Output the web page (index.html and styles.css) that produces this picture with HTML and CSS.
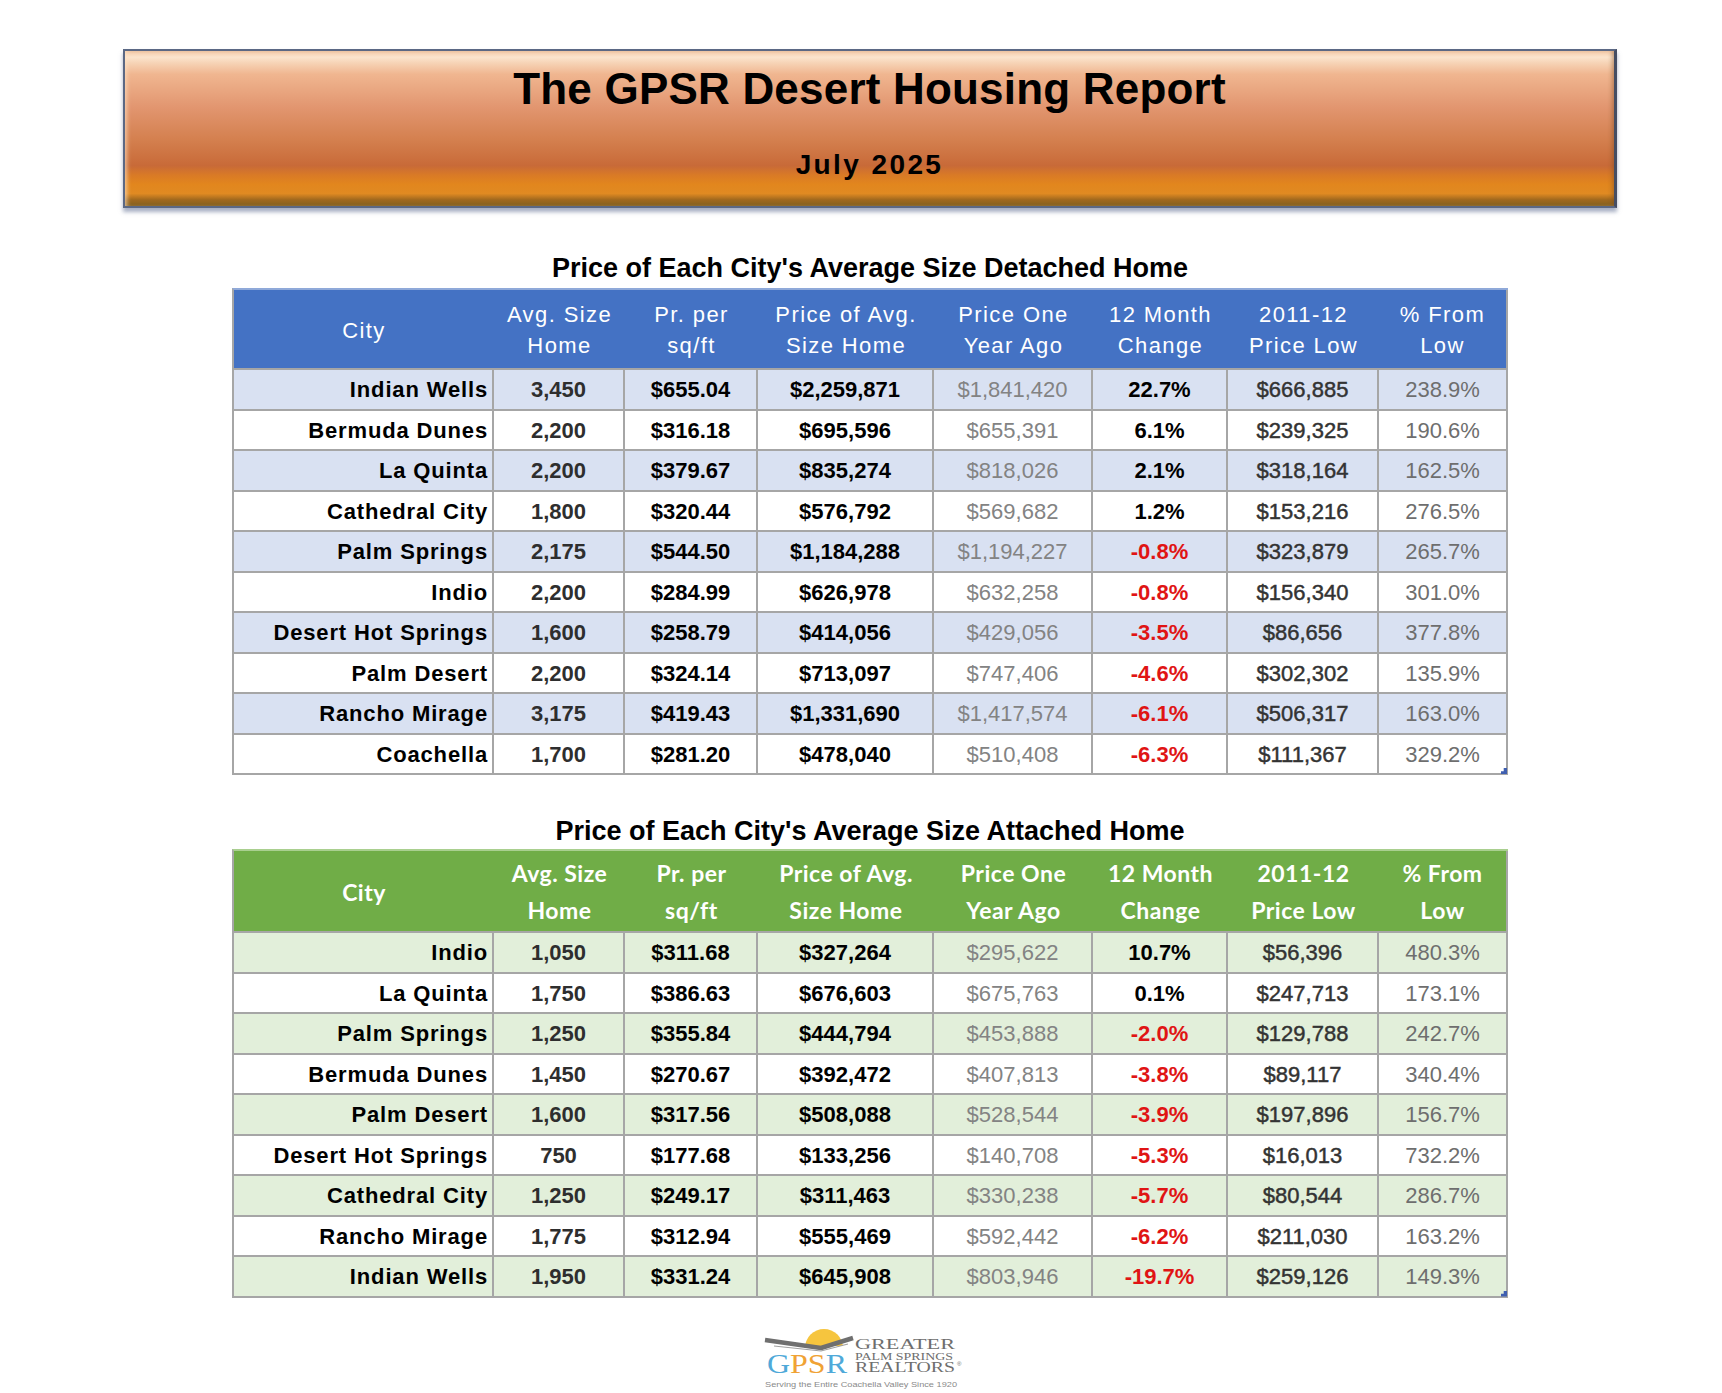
FILE: index.html
```html
<!DOCTYPE html>
<html lang="en">
<head>
<meta charset="utf-8">
<title>The GPSR Desert Housing Report - July 2025</title>
<link rel="stylesheet" href="styles.css">
</head>
<body>
<div class="sheet">
  <header class="banner">
    <h1 class="banner-title">The GPSR Desert Housing Report</h1>
    <div class="banner-date">July 2025</div>
  </header>

  <section class="report report-detached">
    <h2 class="report-title">Price of Each City's Average Size Detached Home</h2>
    <div class="table-wrap">
      <table class="grid grid-blue">
        <colgroup>
          <col class="c-city"><col class="c-size"><col class="c-ppsf"><col class="c-price"><col class="c-prev"><col class="c-chg"><col class="c-low"><col class="c-pct">
        </colgroup>
        <thead>
          <tr>
            <th>City</th><th>Avg. Size<br>Home</th><th>Pr. per<br>sq/ft</th><th>Price of Avg.<br>Size Home</th><th>Price One<br>Year Ago</th><th>12 Month<br>Change</th><th>2011-12<br>Price Low</th><th>% From<br>Low</th>
          </tr>
        </thead>
        <tbody>
          <tr><td class="city">Indian Wells</td><td class="size">3,450</td><td class="strong">$655.04</td><td class="strong">$2,259,871</td><td class="prev">$1,841,420</td><td class="strong">22.7%</td><td class="low">$666,885</td><td class="pct">238.9%</td></tr>
          <tr><td class="city">Bermuda Dunes</td><td class="size">2,200</td><td class="strong">$316.18</td><td class="strong">$695,596</td><td class="prev">$655,391</td><td class="strong">6.1%</td><td class="low">$239,325</td><td class="pct">190.6%</td></tr>
          <tr><td class="city">La Quinta</td><td class="size">2,200</td><td class="strong">$379.67</td><td class="strong">$835,274</td><td class="prev">$818,026</td><td class="strong">2.1%</td><td class="low">$318,164</td><td class="pct">162.5%</td></tr>
          <tr><td class="city">Cathedral City</td><td class="size">1,800</td><td class="strong">$320.44</td><td class="strong">$576,792</td><td class="prev">$569,682</td><td class="strong">1.2%</td><td class="low">$153,216</td><td class="pct">276.5%</td></tr>
          <tr><td class="city">Palm Springs</td><td class="size">2,175</td><td class="strong">$544.50</td><td class="strong">$1,184,288</td><td class="prev">$1,194,227</td><td class="strong neg">-0.8%</td><td class="low">$323,879</td><td class="pct">265.7%</td></tr>
          <tr><td class="city">Indio</td><td class="size">2,200</td><td class="strong">$284.99</td><td class="strong">$626,978</td><td class="prev">$632,258</td><td class="strong neg">-0.8%</td><td class="low">$156,340</td><td class="pct">301.0%</td></tr>
          <tr><td class="city">Desert Hot Springs</td><td class="size">1,600</td><td class="strong">$258.79</td><td class="strong">$414,056</td><td class="prev">$429,056</td><td class="strong neg">-3.5%</td><td class="low">$86,656</td><td class="pct">377.8%</td></tr>
          <tr><td class="city">Palm Desert</td><td class="size">2,200</td><td class="strong">$324.14</td><td class="strong">$713,097</td><td class="prev">$747,406</td><td class="strong neg">-4.6%</td><td class="low">$302,302</td><td class="pct">135.9%</td></tr>
          <tr><td class="city">Rancho Mirage</td><td class="size">3,175</td><td class="strong">$419.43</td><td class="strong">$1,331,690</td><td class="prev">$1,417,574</td><td class="strong neg">-6.1%</td><td class="low">$506,317</td><td class="pct">163.0%</td></tr>
          <tr><td class="city">Coachella</td><td class="size">1,700</td><td class="strong">$281.20</td><td class="strong">$478,040</td><td class="prev">$510,408</td><td class="strong neg">-6.3%</td><td class="low">$111,367</td><td class="pct">329.2%</td></tr>
        </tbody>
      </table>
      <span class="corner-mark"></span>
    </div>
  </section>

  <section class="report report-attached">
    <h2 class="report-title">Price of Each City's Average Size Attached Home</h2>
    <div class="table-wrap">
      <table class="grid grid-green">
        <colgroup>
          <col class="c-city"><col class="c-size"><col class="c-ppsf"><col class="c-price"><col class="c-prev"><col class="c-chg"><col class="c-low"><col class="c-pct">
        </colgroup>
        <thead>
          <tr>
            <th>City</th><th>Avg. Size<br>Home</th><th>Pr. per<br>sq/ft</th><th>Price of Avg.<br>Size Home</th><th>Price One<br>Year Ago</th><th>12 Month<br>Change</th><th>2011-12<br>Price Low</th><th>% From<br>Low</th>
          </tr>
        </thead>
        <tbody>
          <tr><td class="city">Indio</td><td class="size">1,050</td><td class="strong">$311.68</td><td class="strong">$327,264</td><td class="prev">$295,622</td><td class="strong">10.7%</td><td class="low">$56,396</td><td class="pct">480.3%</td></tr>
          <tr><td class="city">La Quinta</td><td class="size">1,750</td><td class="strong">$386.63</td><td class="strong">$676,603</td><td class="prev">$675,763</td><td class="strong">0.1%</td><td class="low">$247,713</td><td class="pct">173.1%</td></tr>
          <tr><td class="city">Palm Springs</td><td class="size">1,250</td><td class="strong">$355.84</td><td class="strong">$444,794</td><td class="prev">$453,888</td><td class="strong neg">-2.0%</td><td class="low">$129,788</td><td class="pct">242.7%</td></tr>
          <tr><td class="city">Bermuda Dunes</td><td class="size">1,450</td><td class="strong">$270.67</td><td class="strong">$392,472</td><td class="prev">$407,813</td><td class="strong neg">-3.8%</td><td class="low">$89,117</td><td class="pct">340.4%</td></tr>
          <tr><td class="city">Palm Desert</td><td class="size">1,600</td><td class="strong">$317.56</td><td class="strong">$508,088</td><td class="prev">$528,544</td><td class="strong neg">-3.9%</td><td class="low">$197,896</td><td class="pct">156.7%</td></tr>
          <tr><td class="city">Desert Hot Springs</td><td class="size">750</td><td class="strong">$177.68</td><td class="strong">$133,256</td><td class="prev">$140,708</td><td class="strong neg">-5.3%</td><td class="low">$16,013</td><td class="pct">732.2%</td></tr>
          <tr><td class="city">Cathedral City</td><td class="size">1,250</td><td class="strong">$249.17</td><td class="strong">$311,463</td><td class="prev">$330,238</td><td class="strong neg">-5.7%</td><td class="low">$80,544</td><td class="pct">286.7%</td></tr>
          <tr><td class="city">Rancho Mirage</td><td class="size">1,775</td><td class="strong">$312.94</td><td class="strong">$555,469</td><td class="prev">$592,442</td><td class="strong neg">-6.2%</td><td class="low">$211,030</td><td class="pct">163.2%</td></tr>
          <tr><td class="city">Indian Wells</td><td class="size">1,950</td><td class="strong">$331.24</td><td class="strong">$645,908</td><td class="prev">$803,946</td><td class="strong neg">-19.7%</td><td class="low">$259,126</td><td class="pct">149.3%</td></tr>
        </tbody>
      </table>
      <span class="corner-mark"></span>
    </div>
  </section>

  <footer class="logo-row">
    <svg class="logo" width="204" height="60" viewBox="0 0 204 60" xmlns="http://www.w3.org/2000/svg" role="img" aria-label="Greater Palm Springs Realtors">
      <defs>
        <clipPath id="sunclip"><rect x="0" y="0" width="204" height="17"/></clipPath>
      </defs>
      <circle cx="60" cy="19" r="19" fill="#f6c53e" clip-path="url(#sunclip)"/>
      <polyline points="1,11 57,19 89,9" fill="none" stroke="#6f6f6f" stroke-width="4.5" stroke-linejoin="round"/>
      <polyline points="10,17 57,22 84,15" fill="none" stroke="#a0a0a0" stroke-width="1.2"/>
      <text x="3" y="44" class="logo-gpsr" textLength="80" lengthAdjust="spacingAndGlyphs"><tspan fill="#4fa9d9">G</tspan><tspan fill="#f0a234">PS</tspan><tspan fill="#4fa9d9">R</tspan></text>
      <text x="91" y="20" class="logo-greater" textLength="100" lengthAdjust="spacingAndGlyphs">GREATER</text>
      <text x="91" y="31" class="logo-palm" textLength="98" lengthAdjust="spacingAndGlyphs">PALM SPRINGS</text>
      <text x="91" y="43" class="logo-realtors" textLength="100" lengthAdjust="spacingAndGlyphs">REALTORS</text>
      <text x="193" y="37" class="logo-reg">®</text>
      <text x="1" y="58" class="logo-tag" textLength="192" lengthAdjust="spacingAndGlyphs">Serving the Entire Coachella Valley Since 1920</text>
    </svg>
  </footer>
</div>
</body>
</html>
```

FILE: styles.css
```css
* { box-sizing: border-box; }

html, body {
  margin: 0;
  padding: 0;
  background: #ffffff;
}

body {
  font-family: "Liberation Sans", Arial, sans-serif;
  color: #000;
}

.sheet {
  width: 1494px;
  margin-left: 123px;
  display: flex;
  flex-direction: column;
  align-items: center;
}

/* ---------- Banner ---------- */
.banner {
  width: 1494px;
  height: 159px;
  margin-top: 49px;
  padding-top: 13px;
  border: 2px solid #5b6884;
  border-right: 3px solid #454d62;
  display: flex;
  flex-direction: column;
  align-items: center;
  background: linear-gradient(to bottom,
    #f4c9a8 0%,
    #fbe4cd 4%,
    #f6d2b4 8%,
    #f0b690 15%,
    #e29670 36%,
    #d4804f 57%,
    #c86a38 74%,
    #d97a26 80%,
    #e2861d 86%,
    #e08a22 92%,
    #a0681e 96%,
    #82601f 100%);
  box-shadow:
    inset 4px 0 4px -2px rgba(255, 225, 195, 0.7),
    inset -4px 0 4px -2px rgba(120, 70, 30, 0.45),
    0 4px 4px rgba(95, 110, 145, 0.55);
}

.banner-title {
  margin: 0;
  font-size: 44px;
  line-height: 50px;
  font-weight: 700;
  letter-spacing: 0.2px;
  color: #000;
}

.banner-date {
  margin-top: 34px;
  font-size: 28px;
  line-height: 34px;
  font-weight: 700;
  letter-spacing: 2.4px;
  color: #000;
}

/* ---------- Report sections ---------- */
.report {
  display: flex;
  flex-direction: column;
  align-items: center;
}

.report-detached { margin-top: 44px; }
.report-attached { margin-top: 40px; }

.report-title {
  margin: 0;
  font-size: 27px;
  line-height: 32px;
  font-weight: 700;
  letter-spacing: 0;
  color: #000;
}

.report-detached .table-wrap { margin-top: 4px; }
.report-attached .table-wrap { margin-top: 2px; }

.table-wrap {
  position: relative;
}

.corner-mark {
  position: absolute;
  right: 1px;
  bottom: 1px;
  width: 6px;
  height: 6px;
  background: #3f5fb0;
  clip-path: polygon(100% 0, 100% 100%, 0 100%, 0 55%, 45% 55%, 45% 0);
}

/* ---------- Tables ---------- */
.grid {
  width: 1274px;
  table-layout: fixed;
  border-collapse: separate;
  border-spacing: 0;
  border-left: 2px solid #a6a6a6;
  border-top: 2px solid #8fa9d9;
}

.grid-green { border-top-color: #a9cf8f; }

.c-city  { width: 260px; }
.c-size  { width: 131px; }
.c-ppsf  { width: 133px; }
.c-price { width: 176px; }
.c-prev  { width: 159px; }
.c-chg   { width: 135px; }
.c-low   { width: 151px; }
.c-pct   { width: 129px; }

.grid th {
  padding: 0;
  font-weight: 400;
  color: #ffffff;
  text-align: center;
  vertical-align: middle;
  border-bottom: 2px solid #a6a6a6;
}

.grid th:last-child { border-right: 2px solid #a6a6a6; }

.grid-blue thead tr { height: 80px; }
.grid-blue th {
  background: #4472c4;
  font-size: 22px;
  line-height: 31px;
  letter-spacing: 1.4px;
  padding-top: 2px;
}

.grid-green thead tr { height: 82px; }
.grid-green th {
  background: #70ad47;
  font-family: "Lato", "Liberation Sans", sans-serif;
  font-weight: 700;
  font-size: 23px;
  line-height: 37px;
  letter-spacing: 0.5px;
  padding-top: 2px;
}

.grid tbody tr { height: 40.5px; }

.grid td {
  padding: 2px 0 0;
  font-size: 22px;
  text-align: center;
  vertical-align: middle;
  border-right: 2px solid #a6a6a6;
  border-bottom: 2px solid #a6a6a6;
  white-space: nowrap;
}

.grid-blue tbody tr:nth-child(odd) td { background: #d9e1f2; }
.grid-green tbody tr:nth-child(odd) td { background: #e2efda; }

.grid td.city {
  text-align: right;
  padding-right: 4px;
  font-weight: 700;
  letter-spacing: 0.85px;
  color: #000;
}

.grid td.size {
  font-weight: 700;
  color: #2e2e2e;
}

.grid td.strong {
  font-weight: 700;
  color: #000;
}

.grid td.prev {
  color: #838383;
}

.grid td.low {
  color: #333333;
  -webkit-text-stroke: 0.45px #333333;
}

.grid td.pct {
  color: #6e6e6e;
}

.grid td.neg {
  color: #e01414;
}

/* ---------- Logo ---------- */
.logo-row {
  margin-top: 31px;
  padding-right: 8px;
  display: flex;
  justify-content: center;
}

.logo { display: block; }

.logo-gpsr {
  font-family: "Liberation Serif", serif;
  font-size: 28px;
}

.logo-greater,
.logo-realtors {
  font-family: "Liberation Serif", serif;
  font-size: 15px;
  fill: #6e6e6e;
}

.logo-palm {
  font-family: "Liberation Serif", serif;
  font-size: 10px;
  fill: #6e6e6e;
}

.logo-reg {
  font-family: "Liberation Sans", sans-serif;
  font-size: 6px;
  fill: #6e6e6e;
}

.logo-tag {
  font-family: "Liberation Sans", sans-serif;
  font-size: 7.5px;
  fill: #8a8a8a;
}
```
